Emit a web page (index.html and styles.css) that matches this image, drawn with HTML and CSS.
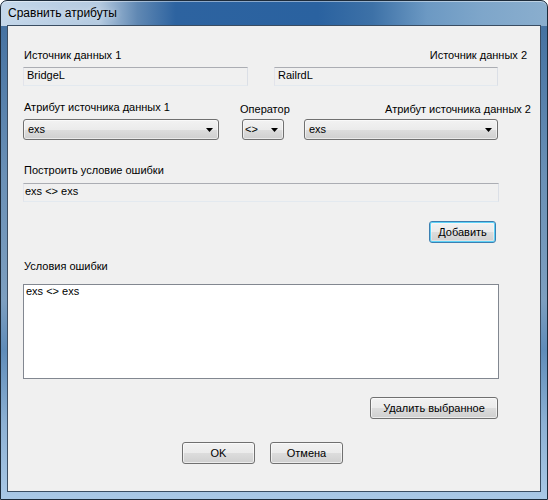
FILE: index.html
```html
<!DOCTYPE html>
<html lang="ru">
<head>
	<meta charset="UTF-8">
	<meta name="viewport" content="width=device-width, initial-scale=1.0">
	<title>Сравнить атрибуты</title>
	<link rel="stylesheet" href="styles.css">
</head>
<body>
	<div class="window">
		<div class="titlebar">Сравнить атрибуты</div>
		<div class="client">
			<div class="sources">
				<div class="field src1">
					<label>Источник данных 1</label>
					<div class="textbox">BridgeL</div>
				</div>
				<div class="field src2">
					<label>Источник данных 2</label>
					<div class="textbox">RailrdL</div>
				</div>
			</div>
			<div class="attrs">
				<div class="field attr1">
					<label>Атрибут источника данных 1</label>
					<div class="combo"><span>exs</span><svg width="7" height="4" viewBox="0 0 7 4"><polygon points="0,0 7,0 3.5,4" fill="#000"/></svg></div>
				</div>
				<div class="field op">
					<label>Оператор</label>
					<div class="combo"><span>&lt;&gt;</span><svg width="7" height="4" viewBox="0 0 7 4"><polygon points="0,0 7,0 3.5,4" fill="#000"/></svg></div>
				</div>
				<div class="field attr2">
					<label>Атрибут источника данных 2</label>
					<div class="combo"><span>exs</span><svg width="7" height="4" viewBox="0 0 7 4"><polygon points="0,0 7,0 3.5,4" fill="#000"/></svg></div>
				</div>
			</div>
			<div class="field cond">
				<label>Построить условие ошибки</label>
				<div class="textbox">exs &lt;&gt; exs</div>
			</div>
			<div class="btnrow add">
				<button class="btn default">Добавить</button>
			</div>
			<div class="field errors">
				<label>Условия ошибки</label>
				<div class="listbox">
					<div class="item">exs &lt;&gt; exs</div>
				</div>
			</div>
			<div class="btnrow del">
				<button class="btn">Удалить выбранное</button>
			</div>
			<div class="dlgbtns">
				<button class="btn">OK</button>
				<button class="btn">Отмена</button>
			</div>
		</div>
	</div>
</body>
</html>
```

FILE: styles.css
```css
*{ box-sizing: border-box; }
body{
	margin: 0;
	background: #fff;
	font-family: "Liberation Sans", Arial, sans-serif;
	font-size: 11px; color: #000;
}
.window{
	width: 548px; height: 500px;
	display: flex; flex-direction: column;
	padding: 0 6px 7px 6px;
	border: 1px solid #1d2b3a; border-radius: 7px 7px 0 0;
	background:
		linear-gradient(90deg, #c4d7ea 0%, #b4cae0 18%, #6088b3 25%, #2d63a0 32%, #2a62a0 58%, #3d71a7 68%, #6c99c3 78%, #7ea6ca 88%, #8aaece 100%) top / 100% 25px no-repeat,
		linear-gradient(180deg, #3f6d9e 0%, #6a90b6 35%, #7d9fc0 60%, #5f8cb9 70%, #8db1d4 85%, #a9c8e6 100%);
	box-shadow: inset 0 1px rgba(255,255,255,.45);
}
.titlebar{
	height: 24px;
	padding: 1px 0 0 1px;
	font-size: 12px; line-height: 23px;
	text-shadow: 0 0 6px rgba(255,255,255,.6);
}
.client{
	flex: 1;
	border: 1px solid #3a4d62;
	background: #f0f0f0;
}
.field>label{
	display: block;
	line-height: 13px;
	padding-left: 1px;
	white-space: nowrap;
}
.textbox{
	height: 19px;
	border: 1px solid; border-color: #abadb3 #dbdfe6 #e3e9ef #e2e3ea;
	background: #f0f0f0;
	line-height: 15px;
	padding: 0 3px;
	white-space: nowrap;
}
.sources{
	display: flex; gap: 26px;
	margin-top: 23px; padding-left: 15px;
}
.sources label{ margin-bottom: 5px; }
.src1{ width: 225px; }
.src2{ width: 224px; }
.src2>label{ text-align: right; margin-right: -29px; }
.attrs{
	display: flex; align-items: flex-end;
	margin-top: 15px; padding-left: 15px;
}
.attr1{ width: 196px; }
.attr1>label{ margin-bottom: 5px; }
.op{ width: 42px; margin-left: 23px; }
.op>label{ margin: 0 0 3px -3px; }
.attr2{ width: 194px; margin-left: 20px; }
.attr2>label{ text-align: right; margin: 0 -33px 3px 0; }
.combo{
	height: 21px;
	display: flex; align-items: center; justify-content: space-between;
	padding: 0 5px 0 4px;
	border: 1px solid #707070; border-radius: 3px;
	background: linear-gradient(#f2f2f2 0%, #ebebeb 50%, #dddddd 50%, #cfcfcf 100%);
	box-shadow: inset 0 0 0 1px rgba(255,255,255,.55);
	line-height: 19px;
}
.op .combo{ padding-left: 2px; }
.cond{ margin-top: 24px; padding-left: 15px; }
.cond>label{ margin-bottom: 6px; }
.cond .textbox{ width: 476px; padding-left: 1px; }
.btnrow{ display: flex; justify-content: flex-end; }
.add{ margin-top: 19px; padding-right: 44px; }
.add .btn{ width: 67px; }
.errors{ margin-top: 17px; padding-left: 15px; }
.errors>label{ margin-bottom: 11px; }
.listbox{
	width: 476px; height: 95px;
	border: 1px solid #828790;
	background: #fff;
}
.listbox .item{ line-height: 13px; padding-left: 2px; }
.del{ margin-top: 18px; padding-right: 42px; }
.del .btn{ width: 128px; }
.dlgbtns{
	display: flex; gap: 15px;
	margin-top: 23px; padding-left: 174px;
}
.dlgbtns .btn{ width: 73px; }
.btn{
	height: 22px; padding: 0;
	font: inherit; color: #000; line-height: 20px;
	border: 1px solid #707070; border-radius: 3px;
	background: linear-gradient(#f2f2f2 0%, #ebebeb 50%, #dddddd 50%, #cfcfcf 100%);
	box-shadow: inset 0 0 0 1px rgba(255,255,255,.6);
}
.btn.default{
	border-color: #3c7fb1;
	box-shadow: inset 0 0 0 1px #5ed2f7, inset 0 0 0 2px rgba(255,255,255,.35);
}
```
